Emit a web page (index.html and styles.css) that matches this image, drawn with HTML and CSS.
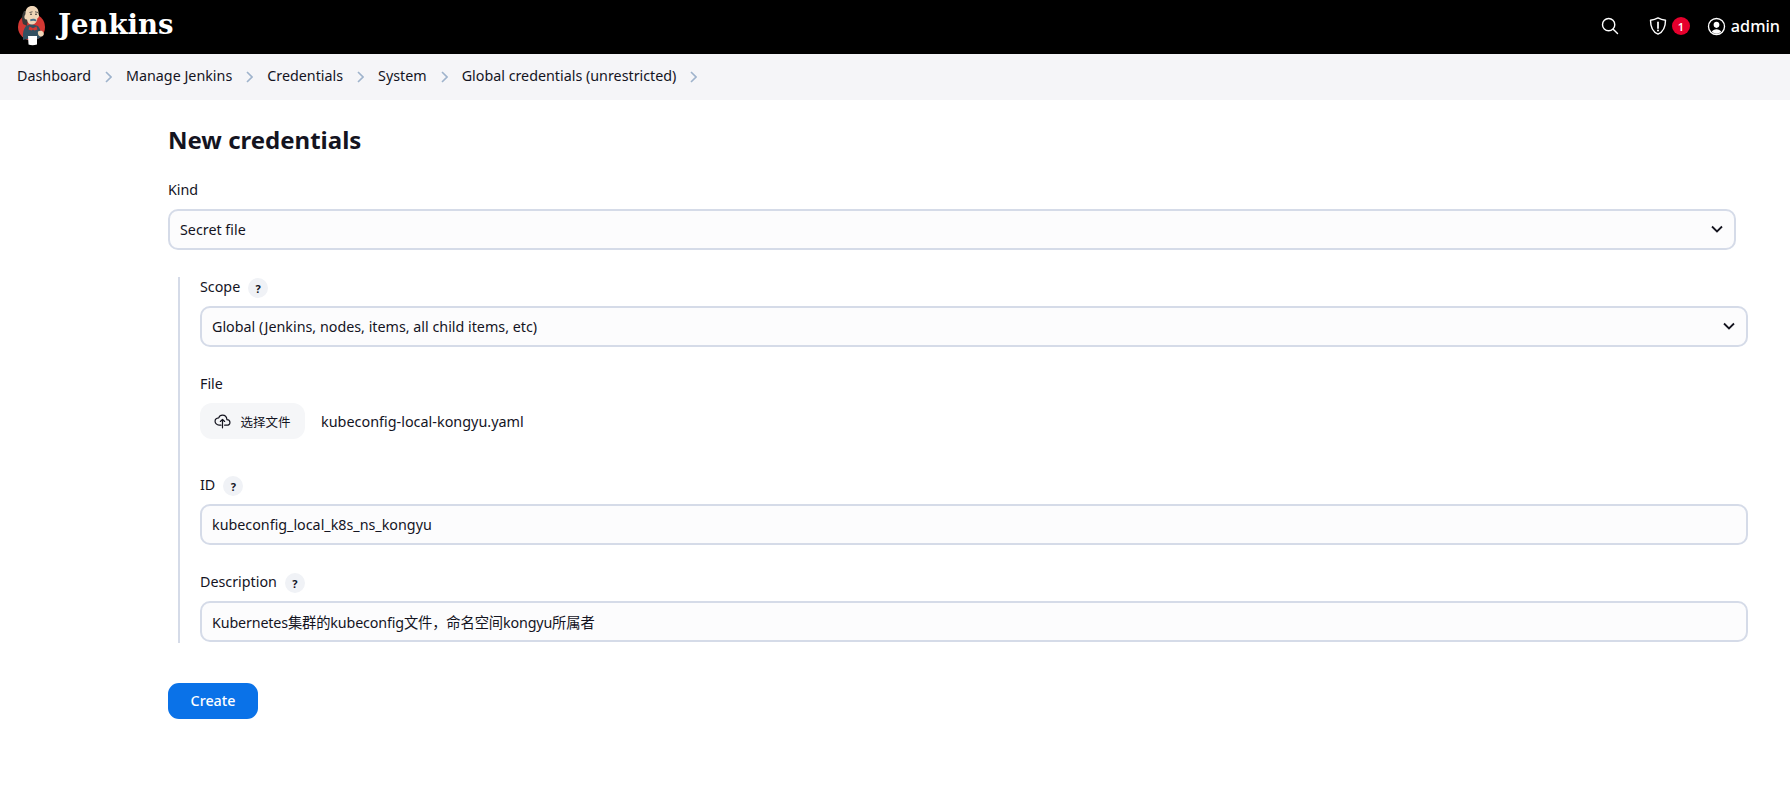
FILE: index.html
```html
<!DOCTYPE html>
<html lang="en">
<head>
<meta charset="utf-8">
<title>New credentials - Jenkins</title>
<link rel="stylesheet" href="styles.css">
</head>
<body>
<header class="topbar">
  <a class="brand">
    <svg class="logo" viewBox="14 4 36 46" aria-hidden="true">
      <circle cx="31.5" cy="27" r="13.5" fill="#d33833"/>
      <path d="M24 11c-2.500 4-2.500 9-1 13l4 2 2-15z" fill="#3a3a3a"/>
      <path d="M23 38c-.5-5 .5-9 3-12l5-2 7 2c2.500 3 3.500 7 3 11l-3 2-5-1-6 1-4 1z" fill="#335061"/>
      <path d="M29.500 26.500l3.500 1.800 3.500-1.800 1 3-3 1-1.500-1-1.500 1-3-1z" fill="#d33833"/>
      <path d="M25.500 13c0-5 3.500-7.500 7.500-7 4 .5 6 4 5.500 8 1 1.500 .5 4-1 4-.5 3.500-2 6.500-5.500 6.500-3 0-4.500-2-5-5-2 .5-3-1.500-2.500-3.500.5-1 1-1.500 1-3z" fill="#f0d6b7"/>
      <path d="M30 19.500c2-1 5-1 6.500.5l-.5 1.300c-2-.8-3.800-.8-5.500 0z" fill="#49728b"/>
      <path d="M29.500 12.500l3-.7M35 11.800l3 .7" stroke="#3a3a3a" stroke-width=".8" fill="none"/>
      <circle cx="31" cy="14.300" r=".8" fill="#222"/><circle cx="36" cy="14.300" r=".8" fill="#222"/>
      <path d="M38 31.500c2-1 4.500-1 5.500 1s-.5 4-2.500 4-3.500-2-3-5z" fill="#f0d6b7"/>
      <path d="M28 36h9v8.500c-3 1-6 1-8.500 0z" fill="#fff"/>
    </svg>
    <span class="wordmark">Jenkins</span>
  </a>
  <div class="top-actions">
    <svg class="ic search-ic" viewBox="0 0 512 512" aria-hidden="true"><path d="M221 64c-87 0-157 70-157 157s70 157 157 157 157-70 157-157S308 64 221 64z" fill="none" stroke="currentColor" stroke-width="36" stroke-miterlimit="10"/><path d="M338 338l110 110" fill="none" stroke="currentColor" stroke-linecap="round" stroke-width="36"/></svg>
    <div class="alert">
      <svg class="ic shield-ic" viewBox="0 0 512 512" aria-hidden="true"><path d="M256 48c-60 35-120 52-192 60 0 170 60 300 192 356 132-56 192-186 192-356-72-8-132-25-192-60z" fill="none" stroke="currentColor" stroke-width="36" stroke-linejoin="round"/><path d="M256 160v150" stroke="currentColor" stroke-width="44" stroke-linecap="round"/><circle cx="256" cy="372" r="26" fill="currentColor"/></svg>
      <span class="badge">1</span>
    </div>
    <div class="user">
      <svg class="ic user-ic" viewBox="0 0 512 512" aria-hidden="true"><circle cx="256" cy="256" r="216" fill="none" stroke="currentColor" stroke-width="36"/><path d="M256 130c-46 0-78 34-78 80s32 84 78 84 78-38 78-84-32-80-78-80zM256 330c-56 0-104 26-126 64 32 36 76 58 126 58s94-22 126-58c-22-38-70-64-126-64z" fill="currentColor"/></svg>
      <span class="user-name">admin</span>
    </div>
  </div>
</header>
<nav class="crumbs">
  <a class="crumb">Dashboard</a><svg class="sep" viewBox="0 0 7 12" aria-hidden="true"><path d="M1 1l5 5-5 5"/></svg>
  <a class="crumb">Manage Jenkins</a><svg class="sep" viewBox="0 0 7 12" aria-hidden="true"><path d="M1 1l5 5-5 5"/></svg>
  <a class="crumb">Credentials</a><svg class="sep" viewBox="0 0 7 12" aria-hidden="true"><path d="M1 1l5 5-5 5"/></svg>
  <a class="crumb">System</a><svg class="sep" viewBox="0 0 7 12" aria-hidden="true"><path d="M1 1l5 5-5 5"/></svg>
  <a class="crumb">Global credentials (unrestricted)</a><svg class="sep" viewBox="0 0 7 12" aria-hidden="true"><path d="M1 1l5 5-5 5"/></svg>
</nav>
<main class="page">
  <h1 class="title">New credentials</h1>
  <form class="form">
    <div class="field">
      <div class="label-row"><label class="label">Kind</label></div>
      <div class="select-wrap">
        <select class="control"><option>Secret file</option></select>
        <svg class="chev" viewBox="0 0 12 8" aria-hidden="true"><path d="M1 1.500l5 5 5-5"/></svg>
      </div>
    </div>
    <div class="nested">
      <div class="field">
        <div class="label-row"><label class="label">Scope</label><span class="help">?</span></div>
        <div class="select-wrap">
          <select class="control"><option>Global (Jenkins, nodes, items, all child items, etc)</option></select>
          <svg class="chev" viewBox="0 0 12 8" aria-hidden="true"><path d="M1 1.500l5 5 5-5"/></svg>
        </div>
      </div>
      <div class="field file-field">
        <div class="label-row"><label class="label">File</label></div>
        <div class="file-row">
          <span class="file-btn">
            <svg class="cloud" viewBox="0 0 512 512" aria-hidden="true"><path d="M320 367h60c55 0 100-29 100-83 0-53-46-81-90-83-9-84-70-135-134-135-61 0-100 40-113 80-53 5-111 38-111 100s55 121 120 121h60" fill="none" stroke="currentColor" stroke-linecap="round" stroke-linejoin="round" stroke-width="36"/><path d="M320 255l-64-64-64 64M256 446V207" fill="none" stroke="currentColor" stroke-linecap="round" stroke-linejoin="round" stroke-width="36"/></svg>
            选择文件
          </span>
          <span class="file-name">kubeconfig-local-kongyu.yaml</span>
        </div>
      </div>
      <div class="field">
        <div class="label-row"><label class="label">ID</label><span class="help">?</span></div>
        <input class="control" type="text" value="kubeconfig_local_k8s_ns_kongyu">
      </div>
      <div class="field last">
        <div class="label-row"><label class="label">Description</label><span class="help">?</span></div>
        <input class="control desc" type="text" value="Kubernetes集群的kubeconfig文件，命名空间kongyu所属者">
      </div>
    </div>
    <button class="create" type="button">Create</button>
  </form>
</main>
</body>
</html>
```
FILE: styles.css
```css
* { box-sizing: border-box; }
html, body { margin: 0; padding: 0; }
body {
  background: #fff;
  color: #14141f;
  font-family: "Noto Sans", "Noto Sans CJK SC", sans-serif;
  font-size: 14.300px;
  height: 810px;
  overflow: hidden;
}
.topbar {
  height: 54px;
  background: #000;
  color: #fff;
  display: flex;
  align-items: center;
  justify-content: space-between;
  padding: 0 10px 0 14px;
}
.brand { display: flex; align-items: center; gap: 8px; margin-top: -2px; }
.logo { width: 36px; height: 46px; display: block; margin-top: 2px; }
.wordmark {
  font-family: "DejaVu Serif", serif;
  font-weight: 700;
  font-size: 27.500px;
  line-height: 1;
  margin-top: -3px;
}
.top-actions { display: flex; align-items: center; margin-top: -2px; }
.ic { display: block; }
.search-ic { width: 20px; height: 20px; margin-right: 28px; margin-top: -1px; }
.alert { display: flex; align-items: center; gap: 4px; margin-right: 17px; }
.shield-ic { width: 20px; height: 20px; }
.badge {
  width: 18px; height: 18px;
  border-radius: 50%;
  background: #e6002d;
  color: #fff;
  font-size: 11px;
  font-weight: 600;
  display: flex; align-items: center; justify-content: center;
}
.user { display: flex; align-items: center; gap: 5px; }
.user-ic { width: 19px; height: 19px; }
.user-name { font-size: 16.200px; font-weight: 500; }
.crumbs {
  height: 46px;
  background: #f5f5f8;
  display: flex;
  align-items: center;
  padding-left: 17px;
  font-size: 14.300px;
}
.crumb { padding-bottom: 4px; }
.sep { width: 7px; height: 12px; margin: 0 14px; fill: none; stroke: #9fb3cc; stroke-width: 1.600; flex: none; }
.page { padding: 20px 54px 0 168px; }
.title { margin: 0; font-size: 24px; line-height: 40px; font-weight: 700; }
.form { margin-top: 21px; }
.field { margin-bottom: 28px; }
.label-row { display: flex; align-items: center; gap: 8px; height: 20px; margin-bottom: 8px; }
.label { line-height: 20px; margin-bottom: 3px; }
.help {
  width: 20px; height: 20px;
  border-radius: 50%;
  background: #f0f2f6;
  font-size: 11px;
  font-weight: 700;
  display: flex; align-items: center; justify-content: center;
}
.select-wrap { position: relative; }
.control {
  display: block;
  width: 100%;
  height: 41px;
  border: 2px solid #d5dbe8;
  border-radius: 10px;
  background: #fcfcfd;
  color: #14141f;
  font: inherit;
  padding: 0 10px;
  outline: none;
  appearance: none;
}
.desc { letter-spacing: -0.15px; }
.chev {
  position: absolute;
  right: 13px; top: 16px;
  width: 12px; height: 8px;
  fill: none;
  stroke: #14141f;
  stroke-width: 1.800;
}
.nested {
  margin: -1px -12px 0 10px;
  border-left: 2px solid #d5dbe8;
  padding: 1px 0 1px 20px;
}
.file-row { display: flex; align-items: center; gap: 16px; height: 36px; }
.file-field { margin-bottom: 37px; }
.file-name { font-size: 14.400px; }
.file-btn {
  height: 36px; width: 105px;
  border-radius: 12px;
  background: #f5f6f8;
  font-size: 12.500px;
  display: flex; align-items: center; justify-content: center; gap: 9px;
}
.cloud { width: 17px; height: 17px; display: block; }
.field.last { margin-bottom: 0; }
.create {
  display: block;
  margin-top: 40px;
  width: 90px; height: 36px;
  border: 0;
  border-radius: 11px;
  background: #0a72e8;
  color: #fff;
  font: inherit;
  font-weight: 500;
  padding: 0 0 2px;
}
```
